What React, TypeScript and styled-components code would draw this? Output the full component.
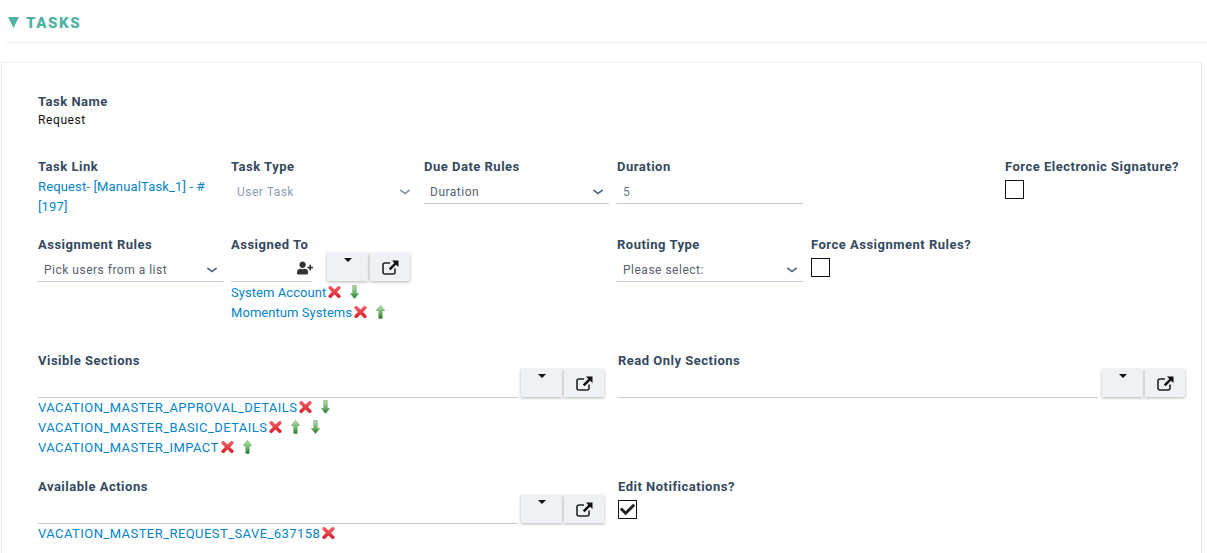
import React from 'react'
import styled, { createGlobalStyle } from 'styled-components'
import { FaUserPlus, FaCheck, FaChevronDown } from 'react-icons/fa'

const Global = createGlobalStyle`
  html, body {
    margin: 0;
    padding: 0;
    height: 553px;
    overflow: hidden;
    background: #fff;
    font-family: Roboto, "Liberation Sans", sans-serif;
    font-size: 12px;
  }
`

const Heading = styled.h2`
  margin: 0 0 0 6px;
  height: 43px;
  box-sizing: border-box;
  padding: 3px 0 0 2px;
  border-bottom: 1px solid #eeeeee;
  color: #4db3a2;
  font-size: 15px;
  line-height: 18px;
  font-weight: 900;
  letter-spacing: 1.6px;
  display: flex;
  align-items: center;
  gap: 7px;
`

const Triangle = styled.svg`
  width: 11px;
  height: 11px;
  fill: #4db3a2;
`

const Card = styled.div`
  margin: 19px 5px 0 1px;
  padding: 31px 0 0 36px;
  height: 600px;
  box-sizing: border-box;
  border-top: 1px solid #f1f1f1;
  border-left: 1px solid #e9e9e9;
  border-right: 1px solid #e9e9e9;
`

const Row = styled.div<{ $top: number }>`
  display: grid;
  grid-template-columns: 185px 185px 185px 186px 186px 186px;
  column-gap: 8px;
  margin-top: ${p => p.$top}px;
`

const HalfRow = styled.div<{ $top: number }>`
  display: grid;
  grid-template-columns: 572px 572px;
  column-gap: 8px;
  margin-top: ${p => p.$top}px;
`

const Field = styled.div<{ $column?: number; $span?: number }>`
  min-width: 0;
  ${p => (p.$column ? `grid-column: ${p.$column};` : '')}
  ${p => (p.$span ? `grid-column: span ${p.$span};` : '')}
`

const Label = styled.div`
  color: #34495e;
  font-size: 13px;
  line-height: 16px;
  font-weight: 700;
  letter-spacing: 0.5px;
  white-space: nowrap;
`

const Value = styled.div`
  color: #111;
  font-size: 12px;
  line-height: 16px;
  letter-spacing: 0.6px;
  margin-top: 2px;
`

const Link = styled.a<{ $caps?: boolean }>`
  color: #0683c9;
  font-size: 13px;
  line-height: 20px;
  letter-spacing: ${p => (p.$caps ? 0.44 : 0.06)}px;
  text-decoration: none;
`

const TaskLink = styled(Link)`
  display: block;
  margin-top: 2px;
  letter-spacing: 0.15px;
`

const Underlined = styled.div<{ $muted?: boolean; $plain?: boolean }>`
  height: 27px;
  margin-top: 2px;
  box-sizing: border-box;
  padding: 4px 5px 0 6px;
  display: flex;
  align-items: center;
  justify-content: space-between;
  border-bottom: 1px solid ${p => (p.$plain ? 'transparent' : '#c2cad8')};
  color: ${p => (p.$muted ? '#8c9db5' : '#555f6d')};
  font-size: 12px;
  letter-spacing: 0.5px;
`

const NumberValue = styled.span`
  color: #6b7a8f;
`

const Chevron = styled(FaChevronDown)<{ $muted?: boolean }>`
  font-size: 12px;
  transform: scaleY(0.8);
  color: ${p => (p.$muted ? '#7f92ab' : '#4b6584')};
`

const Check = styled.div`
  width: 17px;
  height: 17px;
  margin-top: 5px;
  border: 1px solid #111;
  background: #fff;
  display: flex;
  align-items: center;
  justify-content: center;
  font-size: 15px;
  color: #222;
`

const Picker = styled.div`
  display: flex;
  align-items: flex-start;
`

const PickerLine = styled.div`
  flex: 0 0 480px;
  height: 29px;
  box-sizing: border-box;
  border-bottom: 1px solid #c2cad8;
`

const ShortLine = styled(PickerLine)`
  flex: 0 0 80px;
  display: flex;
  align-items: center;
  justify-content: flex-end;
  font-size: 16px;
  color: #333;
  svg {
    margin-right: -2px;
    margin-top: 2px;
  }
`

const Buttons = styled.div<{ $left?: number }>`
  display: flex;
  gap: 2px;
  margin-left: ${p => p.$left ?? 3}px;
`

const Button = styled.button<{ $wide?: boolean }>`
  width: ${p => (p.$wide ? 41 : 40)}px;
  height: 28px;
  padding: 0;
  border: 0;
  background: #eef1f5;
  box-shadow: 0 1px 3px rgba(0, 0, 0, 0.3);
  display: flex;
  align-items: center;
  justify-content: center;
`

const Caret = styled.span`
  width: 0;
  height: 0;
  margin-top: -14px;
  border-left: 4.5px solid transparent;
  border-right: 4.5px solid transparent;
  border-top: 4.5px solid #111;
`

const List = styled.div<{ $top?: number }>`
  margin-top: ${p => p.$top ?? 0}px;
`

const Item = styled.div`
  height: 20px;
  display: flex;
  align-items: center;
  white-space: nowrap;
`

const ItemIcons = styled.span`
  display: inline-flex;
  align-items: center;
  margin-top: -3px;
  margin-left: 2px;
  gap: 9px;

  svg + svg + svg {
    margin-left: 2px;
  }
`

const Cross = () => (
  <svg width="13" height="12" viewBox="0 0 13 12">
    <defs>
      <linearGradient id="crossFill" gradientUnits="userSpaceOnUse" x1="0" y1="0" x2="0" y2="12">
        <stop offset="0" stopColor="#f0636c" />
        <stop offset="1" stopColor="#d81e2c" />
      </linearGradient>
    </defs>
    <path d="M2.2 1.8 10.8 10.2M10.8 1.8 2.2 10.2" stroke="url(#crossFill)" strokeWidth="3.6" strokeLinecap="round" />
  </svg>
)

const Arrow = ({ up }: { up?: boolean }) => (
  <svg width="9" height="14" viewBox="0 0 9 14">
    <defs>
      <linearGradient id="arrowFill" x1="0" y1="0" x2="0" y2="1">
        <stop offset="0" stopColor="#bfe4ae" />
        <stop offset="0.6" stopColor="#6db266" />
        <stop offset="1" stopColor="#1f6b2a" />
      </linearGradient>
    </defs>
    <path
      d={up ? 'M4.5 .5 8.6 5.5 6.2 5.5 6.2 13.6 2.8 13.6 2.8 5.5 .4 5.5Z' : 'M4.5 13.5 8.6 8.5 6.2 8.5 6.2 .4 2.8 .4 2.8 8.5 .4 8.5Z'}
      fill="url(#arrowFill)"
      stroke="#3f8f45"
      strokeWidth=".5"
    />
  </svg>
)

const OpenIcon = () => (
  <svg width="17" height="15" viewBox="0 0 17 15" fill="none">
    <path d="M13 8.5V12a2 2 0 0 1-2 2H3a2 2 0 0 1-2-2V5a2 2 0 0 1 2-2h5" stroke="#222" strokeWidth="1.6" />
    <path d="M10 0.5h6.5V7l-2.4-2.3L8.6 10.2 6.8 8.4l5.5-5.5Z" fill="#111" />
  </svg>
)

const PickerButtons = () => (
  <>
    <Button $wide>
      <Caret />
    </Button>
    <Button>
      <OpenIcon />
    </Button>
  </>
)

const Entry = ({ name, caps, up, down }: { name: string; caps?: boolean; up?: boolean; down?: boolean }) => (
  <Item>
    <Link $caps={caps}>{name}</Link>
    <ItemIcons>
      <Cross />
      {up ? <Arrow up /> : null}
      {down ? <Arrow /> : null}
    </ItemIcons>
  </Item>
)

export default function App() {
  return (
    <>
      <Global />
      <Heading>
        <Triangle viewBox="0 0 11 11">
          <path d="M0 0h11L5.5 11Z" />
        </Triangle>
        TASKS
      </Heading>
      <Card>
        <Label>Task Name</Label>
        <Value>Request</Value>

        <Row $top={31}>
          <Field>
            <Label>Task Link</Label>
            <TaskLink>Request- [ManualTask_1] - # [197]</TaskLink>
          </Field>
          <Field>
            <Label>Task Type</Label>
            <Underlined $muted $plain>
              User Task
              <Chevron $muted />
            </Underlined>
          </Field>
          <Field>
            <Label>Due Date Rules</Label>
            <Underlined>
              Duration
              <Chevron />
            </Underlined>
          </Field>
          <Field>
            <Label>Duration</Label>
            <Underlined>
              <NumberValue>5</NumberValue>
            </Underlined>
          </Field>
          <Field $column={6}>
            <Label>Force Electronic Signature?</Label>
            <Check />
          </Field>
        </Row>

        <Row $top={20}>
          <Field>
            <Label>Assignment Rules</Label>
            <Underlined>
              Pick users from a list
              <Chevron />
            </Underlined>
          </Field>
          <Field $span={2}>
            <Label>Assigned To</Label>
            <Picker>
              <ShortLine>
                <FaUserPlus />
              </ShortLine>
              <Buttons $left={16}>
                <PickerButtons />
              </Buttons>
            </Picker>
            <List $top={1}>
              <Entry name="System Account" down />
              <Entry name="Momentum Systems" up />
            </List>
          </Field>
          <Field>
            <Label>Routing Type</Label>
            <Underlined>
              Please select:
              <Chevron />
            </Underlined>
          </Field>
          <Field>
            <Label>Force Assignment Rules?</Label>
            <Check />
          </Field>
        </Row>

        <HalfRow $top={30}>
          <Field>
            <Label>Visible Sections</Label>
            <Picker>
              <PickerLine />
              <Buttons>
                <PickerButtons />
              </Buttons>
            </Picker>
            <List>
              <Entry caps name="VACATION_MASTER_APPROVAL_DETAILS" down />
              <Entry caps name="VACATION_MASTER_BASIC_DETAILS" up down />
              <Entry caps name="VACATION_MASTER_IMPACT" up />
            </List>
          </Field>
          <Field>
            <Label>Read Only Sections</Label>
            <Picker>
              <PickerLine />
              <Buttons $left={4}>
                <PickerButtons />
              </Buttons>
            </Picker>
          </Field>
        </HalfRow>

        <HalfRow $top={21}>
          <Field>
            <Label>Available Actions</Label>
            <Picker>
              <PickerLine />
              <Buttons>
                <PickerButtons />
              </Buttons>
            </Picker>
            <List>
              <Entry caps name="VACATION_MASTER_REQUEST_SAVE_637158" />
            </List>
          </Field>
          <Field>
            <Label>Edit Notifications?</Label>
            <Check>
              <FaCheck />
            </Check>
          </Field>
        </HalfRow>
      </Card>
    </>
  )
}
